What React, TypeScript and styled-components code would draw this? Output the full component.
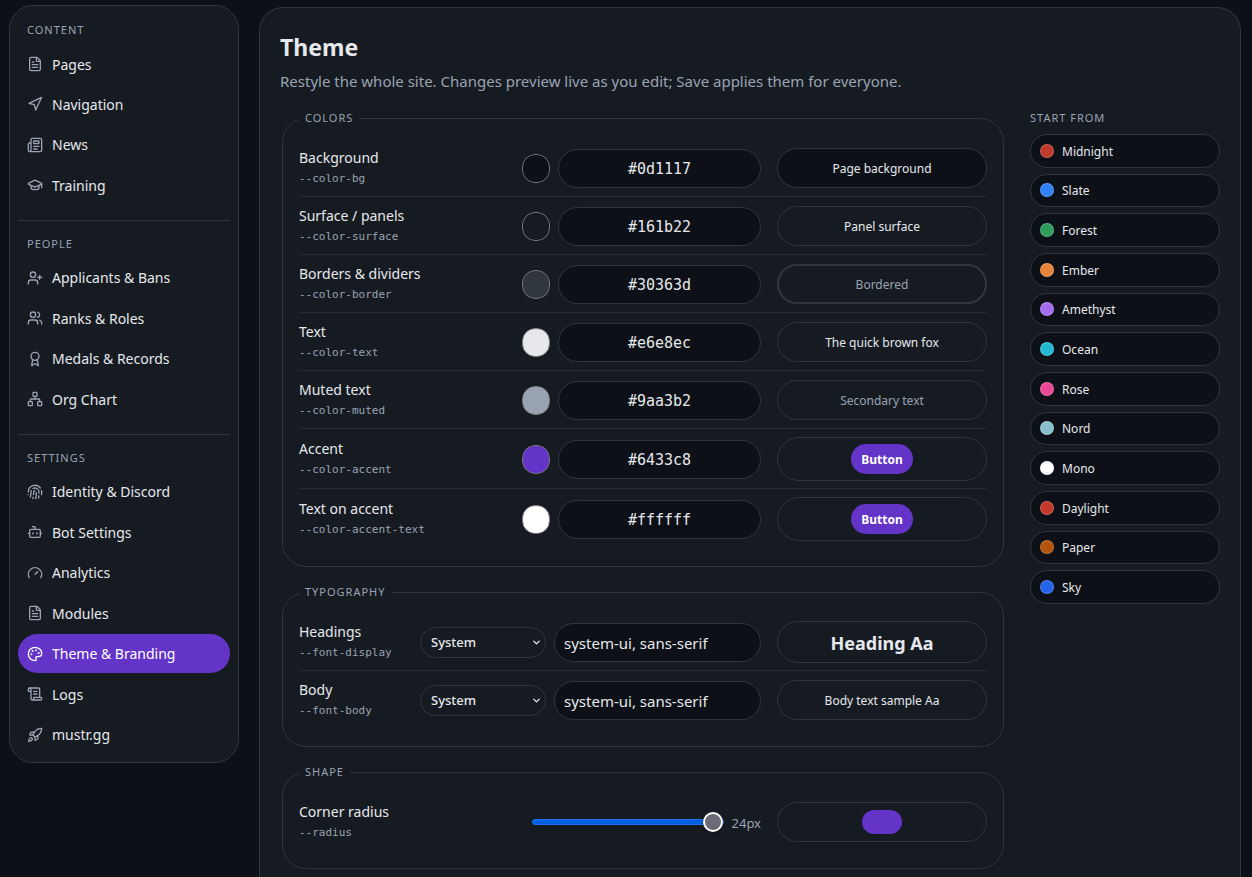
import React, { useState } from "react";
import styled, { createGlobalStyle, css } from "styled-components";
import {
  Award,
  Bot,
  ChevronDown,
  FileText,
  Fingerprint,
  Gauge,
  GraduationCap,
  Navigation,
  Network,
  Newspaper,
  Palette,
  Rocket,
  ScrollText,
  UserPlus,
  Users,
  type LucideIcon,
} from "lucide-react";

const color = {
  bg: "#0d1117",
  surface: "#161b22",
  border: "#30363d",
  divider: "#272c34",
  text: "#e6e8ec",
  muted: "#9aa3b2",
  accent: "#6433c8",
  accentText: "#ffffff",
};

const sans = `"Noto Sans", "Open Sans", sans-serif`;
const mono = `"DejaVu Sans Mono", "Liberation Mono", monospace`;

const GlobalStyle = createGlobalStyle`
  *, *::before, *::after { box-sizing: border-box; }
  body {
    margin: 0;
    background: ${color.bg};
    color: ${color.text};
    font-family: ${sans};
    font-size: 15px;
  }
  button, input, select { font-family: inherit; color: inherit; }
`;

const Page = styled.div`
  display: flex;
  align-items: flex-start;
  gap: 20px;
  min-height: 100vh;
  padding: 5px 11px 0 9px;
`;

const Sidebar = styled.nav`
  flex: none;
  display: flex;
  flex-direction: column;
  width: 230px;
  min-height: 758px;
  padding: 8px;
  background: ${color.surface};
  border: 1px solid ${color.border};
  border-radius: 24px;
`;

const NavSection = styled.section<{ $weight: number }>`
  flex: ${(p) => p.$weight} 0 auto;
  display: flex;
  flex-direction: column;

  & + & {
    margin-top: 15px;
    padding-top: 7px;
    border-top: 1px solid ${color.border};
  }
`;

const overline = css`
  color: ${color.muted};
  font-size: 11px;
  font-weight: 400;
  line-height: 20px;
  letter-spacing: 1px;
  text-transform: uppercase;
`;

const NavHeading = styled.h2`
  ${overline}
  margin: 0;
  padding: 6px 9px 4px;
`;

const NavList = styled.ul`
  flex: 1;
  display: grid;
  grid-auto-rows: 1fr;
  gap: 1px;
  margin: 0;
  padding: 0;
  list-style: none;
`;

const NavLink = styled.a<{ $active?: boolean }>`
  display: flex;
  align-items: center;
  gap: 9px;
  height: 39px;
  padding: 1px 9px 0;
  border-radius: 20px;
  background: ${(p) => (p.$active ? color.accent : "transparent")};
  color: ${(p) => (p.$active ? color.accentText : color.text)};
  font-size: 14px;
  text-decoration: none;

  svg {
    flex: none;
    color: ${(p) => (p.$active ? color.accentText : color.muted)};
  }
`;

const Main = styled.main`
  flex: 1;
  min-width: 0;
  min-height: calc(100vh - 7px);
  margin-top: 2px;
  padding: 20px 20px 0;
  background: ${color.surface};
  border: 1px solid ${color.border};
  border-bottom: 0;
  border-radius: 24px 24px 0 0;
`;

const Title = styled.h1`
  margin: 0;
  font-size: 23px;
  font-weight: 700;
  line-height: 38px;
`;

const Intro = styled.p`
  margin: 0 0 12px;
  color: ${color.muted};
  font-size: 15px;
  line-height: 30px;
`;

const Columns = styled.div`
  display: grid;
  grid-template-columns: minmax(0, 1fr) 190px;
  gap: 24px;
  align-items: start;
`;

const Form = styled.form`
  display: flex;
  flex-direction: column;
  gap: 15px;
`;

const Group = styled.fieldset`
  min-width: 0;
  margin: 0 2px;
  padding: 11px 16px 18px;
  border: 1px solid ${color.border};
  border-radius: 24px;
`;

const Legend = styled.legend`
  ${overline}
  padding: 0 6px;
`;

const Row = styled.div`
  display: flex;
  align-items: center;
  gap: 16px;
  padding: 8px 0 7px;

  & + & {
    border-top: 1px solid ${color.divider};
  }
`;

const RowLabel = styled.label`
  flex: 1;
  min-width: 0;
  font-size: 14px;
  line-height: 22px;
  white-space: nowrap;
`;

const Token = styled.code`
  display: block;
  color: ${color.muted};
  font-family: ${mono};
  font-size: 11px;
  line-height: 20px;
`;

const Controls = styled.div`
  flex: none;
  display: flex;
  align-items: center;
  gap: 8px;
`;

const Swatch = styled.input`
  width: 28px;
  height: 29px;
  padding: 0;
  border: 0;
  border-radius: 13px;
  background: none;
  appearance: none;

  &::-webkit-color-swatch-wrapper {
    padding: 0;
  }
  &::-webkit-color-swatch {
    border: 1px solid #777777;
    border-radius: 13px;
  }
`;

const TextField = styled.input<{ $code?: boolean }>`
  width: ${(p) => (p.$code ? 203 : 207)}px;
  height: 39px;
  padding: 2px 9px 0;
  border: 1px solid ${color.border};
  border-radius: 20px;
  background: ${color.bg};
  font-family: ${(p) => (p.$code ? mono : sans)};
  font-size: 15px;
  text-align: ${(p) => (p.$code ? "center" : "left")};
`;

const SelectBox = styled.div`
  position: relative;
  width: 126px;

  svg {
    position: absolute;
    top: 10px;
    right: 4px;
    pointer-events: none;
  }
`;

const Select = styled.select`
  width: 100%;
  height: 31px;
  padding: 0 24px 0 10px;
  border: 1px solid ${color.border};
  border-radius: 16px;
  background: ${color.surface};
  font-size: 13px;
  font-weight: 500;
  appearance: none;
`;

const Slider = styled.input`
  width: 192px;
  height: 20px;
  margin: 0;
  background: none;
  appearance: none;

  &::-webkit-slider-runnable-track {
    height: 6px;
    border: 1px solid #1f70f0;
    border-radius: 3px;
    background: #0060df;
  }
  &::-webkit-slider-thumb {
    width: 20px;
    height: 20px;
    margin-top: -8px;
    border: 2px solid #ffffff;
    border-radius: 50%;
    background: #6b6a76;
    box-shadow: 0 1px 2px rgba(0, 0, 0, 0.5);
    appearance: none;
  }
`;

const SliderValue = styled.output`
  padding-top: 2px;
  color: ${color.muted};
  font-size: 13px;
`;

type Tone = "page" | "plain" | "bordered" | "muted" | "heading";

const Preview = styled.div<{ $tone?: Tone }>`
  flex: none;
  display: flex;
  align-items: center;
  justify-content: center;
  width: 210px;
  min-height: 40px;
  padding: 6px;
  border: ${(p) => (p.$tone === "bordered" ? 2 : 1)}px solid ${color.border};
  border-radius: 22px;
  background: ${(p) => (p.$tone === "page" ? color.bg : color.surface)};
  color: ${(p) => (p.$tone === "muted" || p.$tone === "bordered" ? color.muted : color.text)};
  font-size: ${(p) => (p.$tone === "heading" ? 18 : 12)}px;
  font-weight: ${(p) => (p.$tone === "heading" ? 700 : 400)};
  line-height: ${(p) => (p.$tone === "heading" ? 26 : 20)}px;
`;

const SampleText = styled.span`
  padding-top: 2px;
`;

const SampleButton = styled.button`
  height: 30px;
  padding: 1px 10px 0;
  border: 0;
  border-radius: 15px;
  background: ${color.accent};
  color: ${color.accentText};
  font-size: 12px;
  font-weight: 700;
`;

const RadiusSample = styled.span`
  width: 40px;
  height: 24px;
  border-radius: 12px;
  background: ${color.accent};
`;

const PresetHeading = styled.h2`
  ${overline}
  margin: 0 0 6px;
`;

const PresetList = styled.ul`
  display: grid;
  grid-auto-rows: 1fr;
  gap: 6px;
  min-height: 470px;
  margin: 0;
  padding: 0;
  list-style: none;
`;

const PresetButton = styled.button`
  display: flex;
  align-items: center;
  gap: 8px;
  width: 100%;
  height: 100%;
  padding: 0 9px;
  border: 1px solid ${color.border};
  border-radius: 17px;
  background: ${color.bg};
  font-size: 12px;
  line-height: 20px;
  text-align: left;
`;

const Dot = styled.i<{ $fill: string }>`
  width: 14px;
  height: 14px;
  border: 1px solid rgba(255, 255, 255, 0.2);
  border-radius: 50%;
  background: ${(p) => p.$fill};
`;

const sections: { title: string; items: [string, LucideIcon][] }[] = [
  {
    title: "Content",
    items: [
      ["Pages", FileText],
      ["Navigation", Navigation],
      ["News", Newspaper],
      ["Training", GraduationCap],
    ],
  },
  {
    title: "People",
    items: [
      ["Applicants & Bans", UserPlus],
      ["Ranks & Roles", Users],
      ["Medals & Records", Award],
      ["Org Chart", Network],
    ],
  },
  {
    title: "Settings",
    items: [
      ["Identity & Discord", Fingerprint],
      ["Bot Settings", Bot],
      ["Analytics", Gauge],
      ["Modules", FileText],
      ["Theme & Branding", Palette],
      ["Logs", ScrollText],
      ["mustr.gg", Rocket],
    ],
  },
];

const colorRows: { label: string; token: string; value: string; tone?: Tone; sample?: string }[] = [
  { label: "Background", token: "--color-bg", value: "#0d1117", tone: "page", sample: "Page background" },
  { label: "Surface / panels", token: "--color-surface", value: "#161b22", sample: "Panel surface" },
  { label: "Borders & dividers", token: "--color-border", value: "#30363d", tone: "bordered", sample: "Bordered" },
  { label: "Text", token: "--color-text", value: "#e6e8ec", sample: "The quick brown fox" },
  { label: "Muted text", token: "--color-muted", value: "#9aa3b2", tone: "muted", sample: "Secondary text" },
  { label: "Accent", token: "--color-accent", value: "#6433c8" },
  { label: "Text on accent", token: "--color-accent-text", value: "#ffffff" },
];

const fontRows: { label: string; token: string; tone: Tone; sample: string }[] = [
  { label: "Headings", token: "--font-display", tone: "heading", sample: "Heading Aa" },
  { label: "Body", token: "--font-body", tone: "plain", sample: "Body text sample Aa" },
];

const presets: [string, string][] = [
  ["Midnight", "#c0392b"],
  ["Slate", "#2f81f7"],
  ["Forest", "#2e9e5b"],
  ["Ember", "#e8833a"],
  ["Amethyst", "#a56cf0"],
  ["Ocean", "#22b8cf"],
  ["Rose", "#ec4899"],
  ["Nord", "#88c0d0"],
  ["Mono", "#ffffff"],
  ["Daylight", "#c0392b"],
  ["Paper", "#b45309"],
  ["Sky", "#2563eb"],
];

function ColorRow({ label, token, value, tone, sample }: (typeof colorRows)[number]) {
  const [hex, setHex] = useState(value);
  const update = (e: React.ChangeEvent<HTMLInputElement>) => setHex(e.target.value);
  return (
    <Row>
      <RowLabel htmlFor={token}>
        {label}
        <Token>{token}</Token>
      </RowLabel>
      <Controls>
        <Swatch type="color" aria-label={`${label} picker`} value={hex} onChange={update} />
        <TextField $code id={token} value={hex} onChange={update} spellCheck={false} />
      </Controls>
      <Preview $tone={tone}>
        {sample ? <SampleText>{sample}</SampleText> : <SampleButton type="button">Button</SampleButton>}
      </Preview>
    </Row>
  );
}

function FontRow({ label, token, tone, sample }: (typeof fontRows)[number]) {
  return (
    <Row>
      <RowLabel htmlFor={token}>
        {label}
        <Token>{token}</Token>
      </RowLabel>
      <Controls>
        <SelectBox>
          <Select aria-label={`${label} font`}>
            <option>System</option>
          </Select>
          <ChevronDown size={11} strokeWidth={3} />
        </SelectBox>
        <TextField id={token} defaultValue="system-ui, sans-serif" spellCheck={false} />
      </Controls>
      <Preview $tone={tone}>
        <SampleText>{sample}</SampleText>
      </Preview>
    </Row>
  );
}

export default function App() {
  const [radius, setRadius] = useState(24);
  return (
    <>
      <GlobalStyle />
      <Page>
        <Sidebar>
          {sections.map((section) => (
            <NavSection key={section.title} $weight={section.items.length}>
              <NavHeading>{section.title}</NavHeading>
              <NavList>
                {section.items.map(([name, Icon]) => (
                  <li key={name}>
                    <NavLink href="#" $active={name === "Theme & Branding"}>
                      <Icon size={16} />
                      {name}
                    </NavLink>
                  </li>
                ))}
              </NavList>
            </NavSection>
          ))}
        </Sidebar>
        <Main>
          <Title>Theme</Title>
          <Intro>Restyle the whole site. Changes preview live as you edit; Save applies them for everyone.</Intro>
          <Columns>
            <Form>
              <Group>
                <Legend>Colors</Legend>
                {colorRows.map((row) => (
                  <ColorRow key={row.token} {...row} />
                ))}
              </Group>
              <Group>
                <Legend>Typography</Legend>
                {fontRows.map((row) => (
                  <FontRow key={row.token} {...row} />
                ))}
              </Group>
              <Group>
                <Legend>Shape</Legend>
                <Row>
                  <RowLabel htmlFor="radius">
                    Corner radius
                    <Token>--radius</Token>
                  </RowLabel>
                  <Controls>
                    <Slider
                      id="radius"
                      type="range"
                      min={0}
                      max={24}
                      value={radius}
                      onChange={(e) => setRadius(Number(e.target.value))}
                    />
                    <SliderValue htmlFor="radius">{radius}px</SliderValue>
                  </Controls>
                  <Preview>
                    <RadiusSample />
                  </Preview>
                </Row>
              </Group>
            </Form>
            <aside>
              <PresetHeading>Start from</PresetHeading>
              <PresetList>
                {presets.map(([name, fill]) => (
                  <li key={name}>
                    <PresetButton type="button">
                      <Dot $fill={fill} />
                      <SampleText>{name}</SampleText>
                    </PresetButton>
                  </li>
                ))}
              </PresetList>
            </aside>
          </Columns>
        </Main>
      </Page>
    </>
  );
}
